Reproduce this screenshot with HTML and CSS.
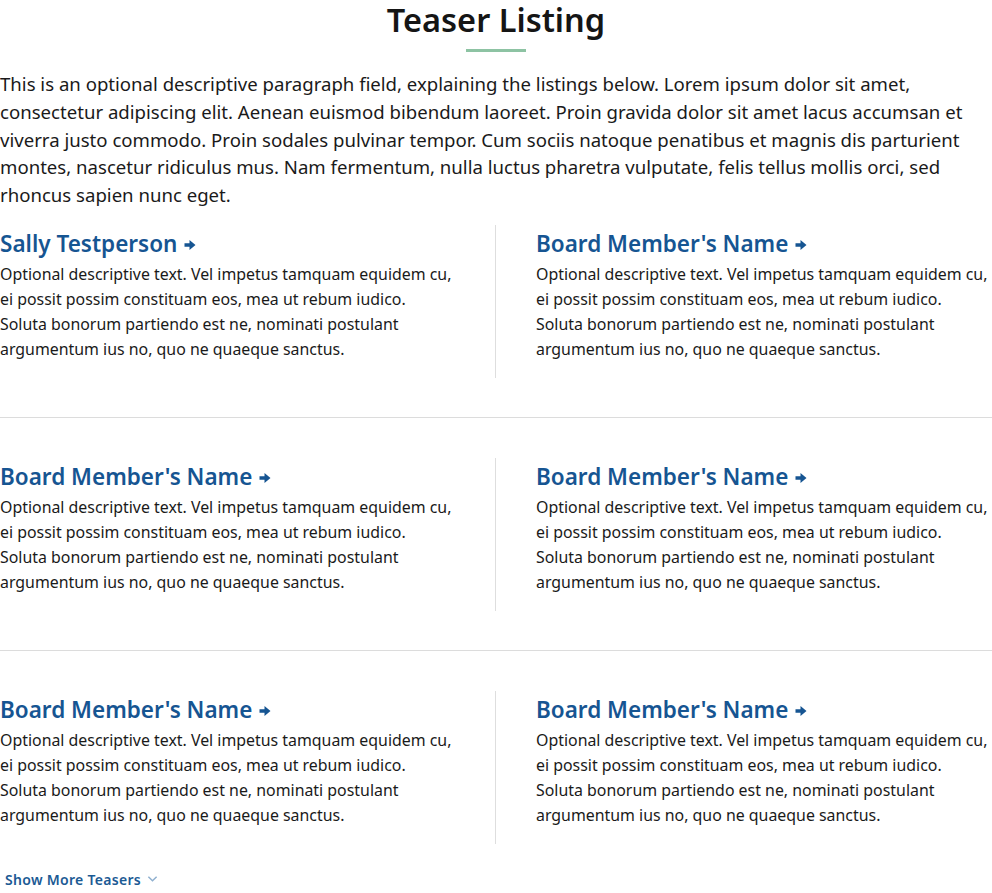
FILE: index.html
```html
<!DOCTYPE html>
<html lang="en">
<head>
<meta charset="utf-8">
<title>Teaser Listing</title>
<link rel="stylesheet" href="styles.css">
</head>
<body>
<section class="listing">
  <h1 class="listing-title">Teaser Listing</h1>
  <div class="title-rule"></div>
  <p class="intro">This is an optional descriptive paragraph field, explaining the listings below. Lorem ipsum dolor sit amet, consectetur adipiscing elit. Aenean euismod bibendum laoreet. Proin gravida dolor sit amet lacus accumsan et viverra justo commodo. Proin sodales pulvinar tempor. Cum sociis natoque penatibus et magnis dis parturient montes, nascetur ridiculus mus. Nam fermentum, nulla luctus pharetra vulputate, felis tellus mollis orci, sed rhoncus sapien nunc eget.</p>

  <div class="row">
    <div class="teaser left">
      <a class="name" href="#">Sally Testperson <svg class="arrow" viewBox="0 0 12 12"><path d="M0.5 4.3h5V1L11.5 6l-6 5V7.7h-5z" fill="currentColor"/></svg></a>
      <p class="desc">Optional descriptive text. Vel impetus tamquam equidem cu, ei possit possim constituam eos, mea ut rebum iudico. Soluta bonorum partiendo est ne, nominati postulant argumentum ius no, quo ne quaeque sanctus.</p>
    </div>
    <div class="teaser right">
      <a class="name" href="#">Board Member's Name <svg class="arrow" viewBox="0 0 12 12"><path d="M0.5 4.3h5V1L11.5 6l-6 5V7.7h-5z" fill="currentColor"/></svg></a>
      <p class="desc">Optional descriptive text. Vel impetus tamquam equidem cu, ei possit possim constituam eos, mea ut rebum iudico. Soluta bonorum partiendo est ne, nominati postulant argumentum ius no, quo ne quaeque sanctus.</p>
    </div>
  </div>
  <hr class="sep">
  <div class="row">
    <div class="teaser left">
      <a class="name" href="#">Board Member's Name <svg class="arrow" viewBox="0 0 12 12"><path d="M0.5 4.3h5V1L11.5 6l-6 5V7.7h-5z" fill="currentColor"/></svg></a>
      <p class="desc">Optional descriptive text. Vel impetus tamquam equidem cu, ei possit possim constituam eos, mea ut rebum iudico. Soluta bonorum partiendo est ne, nominati postulant argumentum ius no, quo ne quaeque sanctus.</p>
    </div>
    <div class="teaser right">
      <a class="name" href="#">Board Member's Name <svg class="arrow" viewBox="0 0 12 12"><path d="M0.5 4.3h5V1L11.5 6l-6 5V7.7h-5z" fill="currentColor"/></svg></a>
      <p class="desc">Optional descriptive text. Vel impetus tamquam equidem cu, ei possit possim constituam eos, mea ut rebum iudico. Soluta bonorum partiendo est ne, nominati postulant argumentum ius no, quo ne quaeque sanctus.</p>
    </div>
  </div>
  <hr class="sep">
  <div class="row">
    <div class="teaser left">
      <a class="name" href="#">Board Member's Name <svg class="arrow" viewBox="0 0 12 12"><path d="M0.5 4.3h5V1L11.5 6l-6 5V7.7h-5z" fill="currentColor"/></svg></a>
      <p class="desc">Optional descriptive text. Vel impetus tamquam equidem cu, ei possit possim constituam eos, mea ut rebum iudico. Soluta bonorum partiendo est ne, nominati postulant argumentum ius no, quo ne quaeque sanctus.</p>
    </div>
    <div class="teaser right">
      <a class="name" href="#">Board Member's Name <svg class="arrow" viewBox="0 0 12 12"><path d="M0.5 4.3h5V1L11.5 6l-6 5V7.7h-5z" fill="currentColor"/></svg></a>
      <p class="desc">Optional descriptive text. Vel impetus tamquam equidem cu, ei possit possim constituam eos, mea ut rebum iudico. Soluta bonorum partiendo est ne, nominati postulant argumentum ius no, quo ne quaeque sanctus.</p>
    </div>
  </div>
  <a class="more" href="#">Show More Teasers <svg class="chev" viewBox="0 0 12 8"><path d="M1.5 1.5 6 6l4.5-4.5" fill="none" stroke="currentColor" stroke-width="1.6"/></svg></a>
</section>
</body>
</html>
```

FILE: styles.css
```css
* { box-sizing: border-box; }
html, body { margin: 0; padding: 0; background: #fff; }
body {
  font-family: "Noto Sans", "Open Sans", sans-serif;
  color: #1a1a1a;
}
.listing { width: 992px; }
.listing-title {
  margin: 0;
  text-align: center;
  font-size: 32.5px;
  font-weight: 600;
  line-height: 40px;
  color: #151515;
}
.title-rule {
  width: 60px;
  height: 3px;
  background: #8dc3a3;
  margin: 9px auto 0;
}
.intro {
  margin: 18px 0 0;
  font-size: 18.6px;
  line-height: 27.75px;
  color: #1a1a1a;
}
.row {
  display: grid;
  grid-template-columns: 496px 496px;
  margin-top: 16px;
}
.sep + .row { margin-top: 40px; }
.teaser { padding-bottom: 16px; }
.teaser.left { border-right: 1px solid #dedede; padding-right: 40px; }
.teaser.right { padding-left: 40px; }
.name {
  display: inline-flex;
  align-items: center;
  gap: 7px;
  padding-top: 1px;
  font-size: 22.5px;
  font-weight: 600;
  line-height: 36px;
  color: #165592;
  text-decoration: none;
}
.arrow { width: 12px; height: 12px; margin-top: 2px; }
.desc {
  margin: 0;
  font-size: 15.9px;
  line-height: 25px;
  color: #1a1a1a;
}
.sep {
  margin: 39px 0 0;
  border: 0;
  border-top: 1px solid #dcdcdc;
  height: 0;
}
.more {
  display: inline-flex;
  align-items: center;
  gap: 6px;
  margin: 26px 0 0 5px;
  font-size: 14px;
  font-weight: 600;
  color: #1b5a94;
  text-decoration: none;
  letter-spacing: 0.3px;
}
.chev { width: 11px; height: 8px; color: #8fb0cf; }
```
